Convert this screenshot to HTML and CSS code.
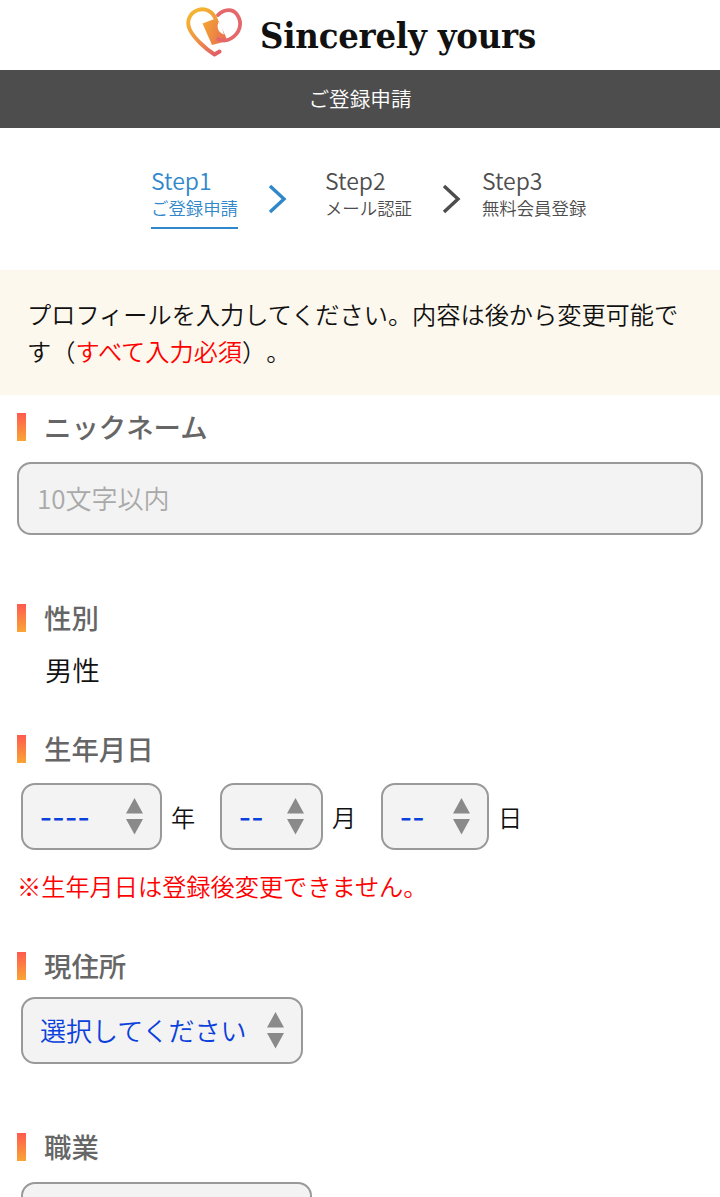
FILE: index.html
```html
<!DOCTYPE html>
<html lang="ja">
<head>
  <meta charset="UTF-8" />
  <meta name="viewport" content="width=device-width, initial-scale=1.0" />
  <title>ご登録申請 | Sincerely yours</title>
  <link rel="stylesheet" href="styles.css">
</head>
<body>
  <svg width="0" height="0" class="defs">
    <symbol id="arrows" viewBox="0 0 17 37">
      <path d="M8.5 0 L17 15.5 H0 Z M0 21 H17 L8.5 36.5 Z" fill="#8a8a8a" />
    </symbol>
  </svg>

  <header class="header">
    <svg class="logo-mark" viewBox="0 0 60 54" width="60" height="54">
      <defs>
        <linearGradient id="heart" gradientUnits="userSpaceOnUse" x1="6" y1="10" x2="34" y2="48">
          <stop offset="0" stop-color="#f4b330" />
          <stop offset="0.55" stop-color="#ee8c45" />
          <stop offset="1" stop-color="#e05d6a" />
        </linearGradient>
        <linearGradient id="card" x1="0" y1="0" x2="1" y2="0.4">
          <stop offset="0" stop-color="#f3a92f" />
          <stop offset="1" stop-color="#e9744f" />
        </linearGradient>
      </defs>
      <path d="M17.500 17.500 L32 12 L41 31 L42 35 L27 39 Z" fill="url(#card)" />
      <path d="M31 14 C28 5 20 1.500 13 4 C4 7 1 16 5 24 C9 32 20 42.500 29.500 48.500 L34.500 45.500" fill="none" stroke="url(#heart)" stroke-width="3.900" stroke-linecap="round" stroke-linejoin="round" />
      <path d="M33 9 C39 2.500 48 2.500 52 8.500 C58 17 55 27 46 32.500 C41 35.500 36 34.500 33 33" fill="none" stroke="#e4686a" stroke-width="3.800" stroke-linecap="round" />
      <path d="M33.500 16 L36 19 L39 28.500 C34 27 31 22 33.500 16 Z" fill="#fff" />
    </svg>
    <span class="logo-text">Sincerely yours</span>
  </header>

  <h1 class="page-title">ご登録申請</h1>

  <div class="steps">
    <div class="step active">
      <span class="step-no">Step1</span>
      <span class="step-name">ご登録申請</span>
    </div>
    <svg class="chevron first" viewBox="0 0 20 30" width="20" height="30"><path d="M2 2 L16 15 L2 28" /></svg>
    <div class="step">
      <span class="step-no">Step2</span>
      <span class="step-name">メール認証</span>
    </div>
    <svg class="chevron second" viewBox="0 0 20 30" width="20" height="30"><path d="M2 2 L16 15 L2 28" /></svg>
    <div class="step">
      <span class="step-no">Step3</span>
      <span class="step-name">無料会員登録</span>
    </div>
  </div>

  <p class="notice">プロフィールを入力してください。内容は後から変更可能です（<span class="required">すべて入力必須</span>）。</p>

  <form class="form">
    <section class="field nickname">
      <h2 class="field-title">ニックネーム</h2>
      <input class="text-input" type="text" placeholder="10文字以内">
    </section>

    <section class="field gender">
      <h2 class="field-title">性別</h2>
      <p class="field-value">男性</p>
    </section>

    <section class="field birthday">
      <h2 class="field-title">生年月日</h2>
      <div class="date-row">
        <span class="select year">
          <select class="dashes"><option>----</option></select>
          <svg class="arrows"><use href="#arrows" /></svg>
        </span>
        <span class="unit">年</span>
        <span class="select month">
          <select class="dashes"><option>--</option></select>
          <svg class="arrows"><use href="#arrows" /></svg>
        </span>
        <span class="unit">月</span>
        <span class="select day">
          <select class="dashes"><option>--</option></select>
          <svg class="arrows"><use href="#arrows" /></svg>
        </span>
        <span class="unit">日</span>
      </div>
      <p class="caution">※生年月日は登録後変更できません。</p>
    </section>

    <section class="field address">
      <h2 class="field-title">現住所</h2>
      <span class="select area">
        <select><option>選択してください</option></select>
        <svg class="arrows"><use href="#arrows" /></svg>
      </span>
    </section>

    <section class="field job">
      <h2 class="field-title">職業</h2>
      <span class="select work">
        <select><option>選択してください</option></select>
        <svg class="arrows"><use href="#arrows" /></svg>
      </span>
    </section>
  </form>
</body>
</html>
```
FILE: styles.css
```css
* {
  box-sizing: border-box;
}

html, body {
  margin: 0;
  padding: 0;
  height: 1197px;
  overflow: hidden;
  background: #fff;
  color: #111;
  font-family: "Noto Sans CJK JP", sans-serif;
  font-weight: 350;
  text-spacing-trim: space-all;
}

h1, h2, p {
  margin: 0;
}

.defs {
  position: absolute;
}

.header {
  display: flex;
  height: 70px;
  padding: 6px 0 0 185px;
}

.logo-mark {
  flex: none;
}

.logo-text {
  margin-left: 15px;
  color: #111;
  font-family: "DejaVu Serif Condensed", "DejaVu Serif", serif;
  font-size: 36px;
  font-stretch: condensed;
  font-weight: bold;
  line-height: 58px;
  letter-spacing: -0.2px;
  white-space: nowrap;
}

.page-title {
  height: 58px;
  background: #4d4d4d;
  color: #fff;
  font-size: 20.6px;
  font-weight: 350;
  line-height: 56px;
  text-align: center;
}

.steps {
  display: flex;
  align-items: flex-start;
  height: 142px;
  padding: 39px 0 0 151px;
  color: #4d4d4d;
}

.step {
  display: flex;
  flex-direction: column;
  height: 62px;
  white-space: nowrap;
}

.step.active {
  border-bottom: 2px solid #3087ca;
  color: #3087ca;
}

.step-no {
  font-size: 23px;
  line-height: 27px;
}

.step-name {
  font-size: 17.4px;
  line-height: 27px;
}

.chevron {
  flex: none;
  margin-top: 17px;
  fill: none;
  stroke: #4d4d4d;
  stroke-width: 3.4;
}

.chevron.first {
  margin-left: 30px;
  margin-right: 37px;
  stroke: #3087ca;
}

.chevron.second {
  margin-left: 30px;
  margin-right: 20px;
}

.notice {
  height: 125px;
  padding: 25px 27px 0;
  background: #fdf8ed;
  font-size: 24.2px;
  line-height: 37px;
}

.required {
  color: #f00;
}

.form {
  padding: 18px 17px 0;
}

.field-title {
  display: flex;
  height: 28px;
  color: #666;
  font-size: 27.4px;
  font-weight: 500;
  line-height: 26px;
}

.field-title::before {
  content: "";
  width: 9px;
  height: 28px;
  margin-right: 18px;
  background: linear-gradient(to bottom, #ff5a50, #f9a535);
}

.nickname {
  height: 191px;
}

.gender {
  height: 131px;
}

.birthday {
  height: 217px;
}

.address {
  height: 181px;
}

.text-input {
  display: block;
  width: 686px;
  height: 73px;
  margin-top: 21px;
  padding: 0 18px 2px;
  border: 2px solid #999;
  border-radius: 14px;
  background: #f3f3f3;
  font: inherit;
  font-size: 26px;
}

.text-input::placeholder {
  color: #a9a9a9;
}

.field-value {
  padding: 17px 0 0 28px;
  font-size: 27.4px;
  line-height: 40px;
}

.date-row {
  display: flex;
  margin: 20px 0 0 4px;
}

.select {
  display: block;
  position: relative;
  height: 67px;
}

.select select {
  width: 100%;
  height: 100%;
  padding: 0 17px 2px;
  appearance: none;
  border: 2px solid #999;
  border-radius: 14px;
  background: #f3f3f3;
  color: #0a40dc;
  font: inherit;
  font-size: 26px;
}

.select .dashes {
  padding: 0 13px 4px 17px;
  font-size: 34px;
  font-weight: 400;
  letter-spacing: 0.8px;
}

.arrows {
  position: absolute;
  top: 15px;
  right: 19px;
  width: 17px;
  height: 37px;
}

.year {
  width: 141px;
}

.month {
  width: 103px;
}

.day {
  width: 108px;
}

.unit {
  width: 58px;
  padding-left: 9px;
  font-size: 24.2px;
  line-height: 67px;
}

.caution {
  margin-top: 17px;
  color: #f00;
  font-size: 24.2px;
  line-height: 37px;
}

.area, .work {
  width: 282px;
  margin: 17px 0 0 4px;
}

.work {
  width: 291px;
  margin-top: 21px;
}
```
